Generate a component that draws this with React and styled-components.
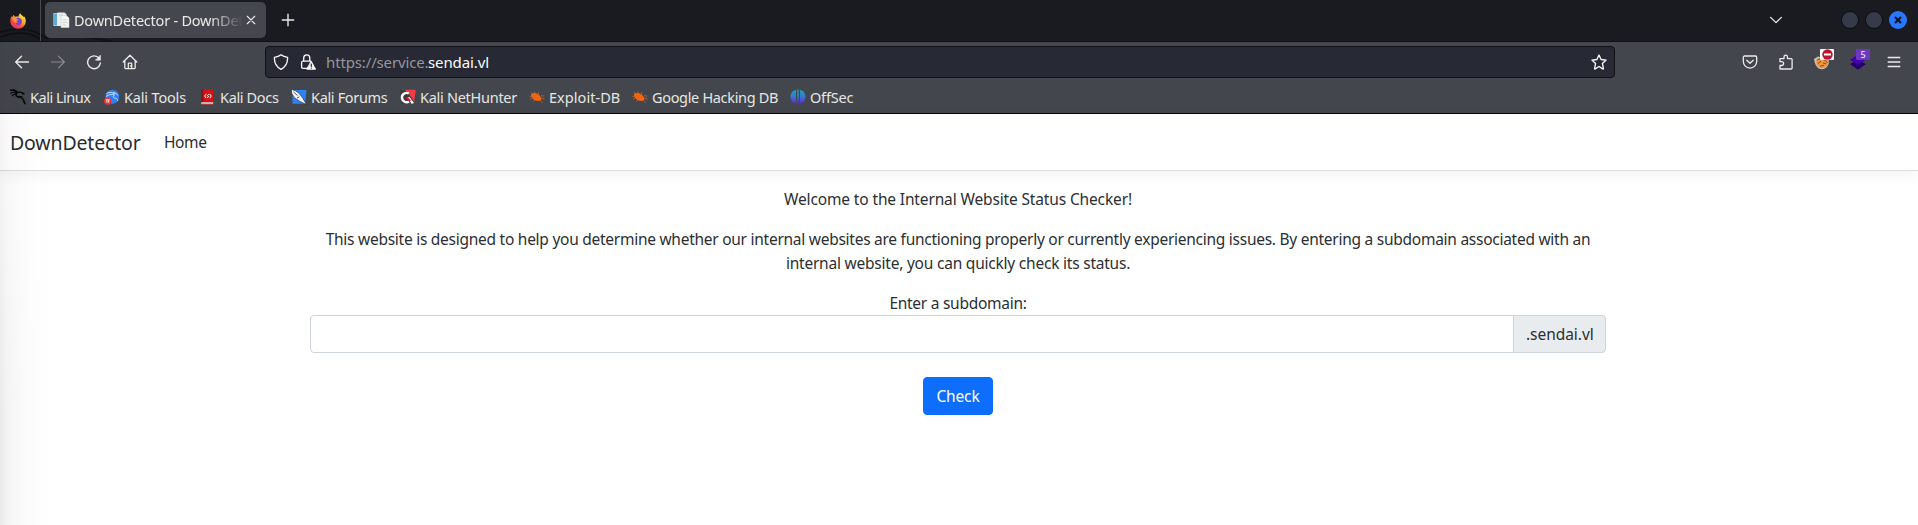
import React from "react";
import styled, { createGlobalStyle } from "styled-components";

const GlobalStyle = createGlobalStyle`
  *, *::before, *::after { box-sizing: border-box; }
  body { margin: 0; background: #fff; overflow: hidden; }
  svg { display: block; flex: none; }
  button, input { font: inherit; }
`;

const Screen = styled.div`
  position: relative;
  display: flex;
  flex-direction: column;
  width: 100%;
  height: 525px;
  overflow: hidden;
  background: #fff;
  font-family: "Noto Sans", sans-serif;
`;

const Text = styled.span`
  display: block;
  white-space: nowrap;
  letter-spacing: ${(p) => p.$track || 0}px;
`;

/* Tab strip */
const TabStrip = styled.header`
  position: relative;
  display: flex;
  align-items: flex-start;
  height: 42px;
  flex: none;
  background: #1a1b20;
  border-bottom: 1px solid #101114;
  color: #e9e9e7;
`;

const Wallpaper = styled.svg`
  position: absolute;
  left: 0;
  top: 0;
`;

const HomeTab = styled.div`
  position: relative;
  display: flex;
  align-items: center;
  width: 41px;
  height: 41px;
  padding-left: 10px;
  border-right: 1px solid #4b4c51;
`;

const Tab = styled.div`
  position: relative;
  display: flex;
  align-items: center;
  width: 221px;
  height: 36px;
  margin: 2px 0 0 4px;
  padding: 0 9px 0 8px;
  border-radius: 5px;
  background: #45474e;
  font-size: 14.5px;
`;

const TabTitle = styled.div`
  width: 169px;
  margin: 0 2px 0 4px;
  overflow: hidden;
  line-height: 24px;
  mask-image: linear-gradient(to right, #000 136px, transparent 169px);
`;

const NewTab = styled.div`
  margin: 13px 0 0 15px;
`;

const WindowControls = styled.div`
  display: flex;
  align-items: center;
  height: 40px;
  margin-left: auto;
  padding-right: 11px;
`;

const TabsMenu = styled.div`
  margin-right: 58px;
`;

const WindowButtons = styled.div`
  display: flex;
  align-items: center;
  gap: 6px;
`;

const WindowButton = styled.div`
  display: flex;
  align-items: center;
  justify-content: center;
  width: 18px;
  height: 18px;
  border: ${(p) => (p.$close ? "0" : "1px solid #0c0d10")};
  border-radius: 50%;
  background: ${(p) => (p.$close ? "#2777ff" : "#363b49")};
`;

/* Navigation toolbar */
const Toolbar = styled.div`
  display: flex;
  align-items: center;
  height: 40px;
  flex: none;
  background: #44464d;
  color: #ececea;
`;

const NavButtons = styled.div`
  display: flex;
  gap: 20px;
  width: 265px;
  padding-left: 14px;
`;

const UrlBar = styled.div`
  display: flex;
  align-items: center;
  width: 1350px;
  height: 32px;
  padding: 0 7px;
  border: 1px solid #111217;
  border-radius: 4px;
  background: #272934;
  color: #fbfbfe;
`;

const SiteIcons = styled.div`
  display: flex;
  gap: 11px;
  width: 53px;
`;

const Url = styled.div`
  display: flex;
  flex: 1;
  font-size: 15px;
  line-height: 24px;
`;

const UrlPrefix = styled(Text)`
  width: 102px;
  color: #96979b;
`;

const Extensions = styled.div`
  display: flex;
  align-items: center;
  gap: 20px;
  margin-left: auto;
  padding-right: 16px;
`;

const Extension = styled.div`
  position: relative;
`;

const Badge = styled.div`
  position: absolute;
  left: 6px;
  top: -5px;
  display: flex;
  align-items: center;
  justify-content: center;
  width: 14px;
  height: 11px;
  border-radius: 1px;
  background: ${(p) => p.$color};
  color: #fff;
  font-size: 9px;
  line-height: 11px;
`;

/* Bookmarks */
const Bookmarks = styled.div`
  display: flex;
  align-items: center;
  height: 32px;
  flex: none;
  padding: 0 0 1px 10px;
  border-bottom: 1px solid #08090b;
  background: #44464d;
  color: #e6e6e3;
  font-size: 14.5px;
  line-height: 24px;
`;

const Bookmark = styled.div`
  display: flex;
  align-items: center;
  gap: 4px;
  width: ${(p) => p.$width}px;
`;

/* Web page */
const Navbar = styled.nav`
  display: flex;
  align-items: center;
  height: 57px;
  flex: none;
  padding-left: 10px;
  border-bottom: 1px solid #dcdddd;
  background: #fff;
  box-shadow: 0 4px 14px rgba(0, 0, 0, 0.05);
  color: #282c30;
`;

const Brand = styled.div`
  width: 154px;
  padding-top: 2px;
  font-size: 19.5px;
  line-height: 30px;
`;

const NavLink = styled.div`
  font-size: 15.5px;
  line-height: 24px;
`;

const Main = styled.main`
  display: flex;
  flex-direction: column;
  align-items: center;
  padding: 16px 2px 0 0;
  color: #2b2f33;
  font-size: 15.5px;
  line-height: 24px;
`;

const Paragraph = styled.div`
  display: flex;
  flex-direction: column;
  align-items: center;
  margin-bottom: 16px;
`;

const InputGroup = styled.div`
  display: flex;
  width: 1296px;
  height: 38px;
  margin-bottom: 24px;
`;

const Input = styled.input`
  flex: 1;
  min-width: 0;
  padding: 6px 12px;
  border: 1px solid #ced4da;
  border-radius: 4px 0 0 4px;
  background: #fff;
  outline: 0;
`;

const Addon = styled.div`
  width: 93px;
  margin-left: -1px;
  padding: 6px 12px;
  border: 1px solid #ced4da;
  border-radius: 0 4px 4px 0;
  background: #e9ecef;
`;

const CheckButton = styled.button`
  width: 70px;
  height: 38px;
  padding: 6px 12px;
  border: 1px solid #0d6efd;
  border-radius: 4px;
  background: #0d6efd;
  color: #fff;
`;

const EdgeShade = styled.div`
  position: absolute;
  inset: 0 auto 0 0;
  width: 52px;
  pointer-events: none;
  background: linear-gradient(to right, rgba(0, 0, 0, 0.085), rgba(0, 0, 0, 0.045) 8px, rgba(0, 0, 0, 0.012) 30px, transparent);
  mask-image: linear-gradient(to bottom, rgba(0, 0, 0, 0.45) 110px, #000 420px);
`;

const Icon = ({ size = 16, children, ...rest }) => (
  <svg width={size} height={size} viewBox="0 0 16 16" fill="none" stroke="currentColor" strokeWidth="1.2" strokeLinecap="round" strokeLinejoin="round" {...rest}>
    {children}
  </svg>
);

const FirefoxIcon = () => (
  <svg width="16" height="16" viewBox="0 0 16 16">
    <defs>
      <linearGradient id="ffBody" x1="0.85" y1="0.05" x2="0.2" y2="0.95">
        <stop offset="0" stopColor="#fff24a" />
        <stop offset="0.42" stopColor="#ffa62b" />
        <stop offset="0.7" stopColor="#ff4b3c" />
        <stop offset="1" stopColor="#e62a86" />
      </linearGradient>
    </defs>
    <path d="M1.5 3.2 2.6 4.1 3.3 1.7 5 3.7C6.5 3.3 8 3.4 8.6 3.7 8.5 2 9.4.8 10.5.2c.3 1.8 2.1 2.3 3.2 3.7l.7-.5c2.2 3.4 1.7 7.6-.8 10C11 16 6.300 16.500 3.200 14.100-.2 11.500-.5 6.700 1.500 3.200Z" fill="url(#ffBody)" />
    <path d="M6.100 5.300c1.200-1.100 3.900-.9 5.200 1 1.100 1.700.7 4.500-1.200 5.400-2 .9-4.500 0-4.800-2.100 1.200.5 2.400.2 3-.7-1-.2-2.200-.4-2.500-1.300Z" fill="#7444dc" />
    <path d="M2.800 5.600c.8-.7 2.200-.6 3.300-.2l2.200 1.100c-.1.900-1.100.8-1.800 1.300-.5.4-.3 1.200.5 1.700-1.500.6-2.900-.2-3.400-1.300Z" fill="#ff982e" />
  </svg>
);

const PageIcon = () => (
  <svg width="17" height="16" viewBox="0 0 17 16">
    <path d="M.5 1h10v13H.5Z" fill="#dceaf2" />
    <path d="M1 1.500h3v12H1Z" fill="#62a9d2" />
    <path d="M4.500.5h7l2 2V13h-9Z" fill="#e9eff2" />
    <path d="M8 3.500h5.500l2.500 2.500v9.500H8Z" fill="#f5f5f3" stroke="#cbd0d2" strokeWidth=".6" />
    <path d="M6 3h4M9.500 8h4.500M9.500 10.500h5M9.500 13h4" stroke="#c3c9cc" strokeWidth=".8" />
  </svg>
);

const KaliIcon = () => (
  <svg width="16" height="16" viewBox="0 0 16 16" fill="none" stroke="#08090a" strokeLinecap="round" strokeLinejoin="round">
    <path d="M.8 1.200C4 .6 6 2 7.500 3.200c-2 1.500-2.200 4 .3 4.600 2.500.6 4.600.8 5.500 2.700.5 1.200.7 2.500 1.700 4" strokeWidth="1.700" />
    <path d="M.7 4.200C3 2.900 5 3 7.500 3.300c2-.5 4.700-.2 6.700 1.600L12.500 4.800M2.400 6.600 6 4.200M8 7.600l4 .1M5.700 2 4 .7" strokeWidth="1.200" />
  </svg>
);

const KaliToolsIcon = () => (
  <svg width="16" height="16" viewBox="0 0 16 16">
    <circle cx="8.300" cy="7.800" r="7" fill="#2e80f2" />
    <path d="M2.500 4.500c3-1.500 6-1.300 8.500.3M2 7.500C5 5.300 8.500 5 10.500 6c-2.500 1.500-1 3 1 3.200 1.600.2 2.100 1.700 2.300 2.800M9 3.600c2.500 0 4 1.300 5 3" fill="none" stroke="#c5e0ff" strokeWidth="1" />
    <circle cx="3.700" cy="12.100" r="3.700" fill="#ee3037" />
    <path d="M1.800 10.700h3.800M2.900 10.700v3M4.700 10.700v3" stroke="#fff" strokeWidth=".9" />
  </svg>
);

const KaliDocsIcon = () => (
  <svg width="16" height="16" viewBox="0 0 16 16">
    <path d="M2 .3h11v12.900H2Z" fill="#d41216" />
    <path d="M1 .5h2.300v13H1Z" fill="#951014" />
    <path d="M1.200 13.300h12v2h-12Z" fill="#eaded6" />
    <path d="M1.200 15.200h12" stroke="#b6181c" strokeWidth=".8" />
    <path d="M6.300 4.800 4.700 7l1.300 2.100M9.600 4.900l1.700 2.100-1.500 2.200M8.900 5.300 7.300 6.600l1.400 1-1.700 1.200" fill="none" stroke="#fff" strokeWidth="1" />
  </svg>
);

const KaliForumsIcon = () => (
  <svg width="16" height="16" viewBox="0 0 16 16">
    <path d="M1.500 1H15.500L14 14.700H1.500Z" fill="#2b83f5" />
    <path d="M.2.300 4.500 1.800 8 4.300 11 8l4.500 7.500L9 12.500 3.500 8.700.8 4.500Z" fill="#f5f6f7" stroke="#1c2029" strokeWidth=".6" />
    <path d="m2.500 3 4 3.600M6 9l2.500-1.200" stroke="#2a3140" strokeWidth=".8" />
  </svg>
);

const NetHunterIcon = () => (
  <svg width="16" height="16" viewBox="0 0 16 16">
    <path d="M2 .8h13.700L14 14.800H4Z" fill="#f33b42" />
    <path d="M0 1h5l3 3 6 8-1.500 2.800H2Z" fill="#3a3b41" />
    <path d="M12.800 14.300 8.300 8.600M8.800 4.500C5.500 2.700 1.500 5.500 2 9c.4 3.500 4 5.300 7 3.700" fill="none" stroke="#fff" strokeWidth="2.400" />
    <path d="m6.300 8.300 4 3.700" stroke="#d81b2c" strokeWidth="2" />
  </svg>
);

const ExploitIcon = () => (
  <svg width="16" height="16" viewBox="0 0 16 16">
    <path d="M2.500 4.800C4.800 3.300 8.300 4.200 10.600 6.600c1.700 1.800 2.200 4 1.200 4.600-2.200 1.200-5.200.8-7.400-.9C2.500 8.800 1.300 6.100 2.500 4.800Z" fill="#f2640f" />
    <path d="M.4 7.300 4 7.500M1.500 3 4 5M5 2.500l2.500 2.500M9.500 3.300l.2 2.700M12 6.800l3.300.2M12 9l3.600 1M11 11l2.800 2.600M6 10.500l-1.500 2M3 9.300l-1.700.8" stroke="#cf6a29" strokeWidth=".7" />
  </svg>
);

const OffSecIcon = () => (
  <svg width="16" height="16" viewBox="0 0 16 16">
    <defs>
      <linearGradient id="offsec" x1="0" y1="0" x2="0" y2="1">
        <stop offset="0" stopColor="#18a6b4" />
        <stop offset="0.5" stopColor="#3d73cf" />
        <stop offset="1" stopColor="#5b22d2" />
      </linearGradient>
    </defs>
    <path d="M6 .8v13.800C2.700 13.800.5 11.200.5 7.700S2.700 1.600 6 .8ZM7.200.4h1.600v15.200H7.200ZM10 .8c3.300.8 5.500 3.400 5.500 6.900s-2.200 6.100-5.500 6.900Z" fill="url(#offsec)" />
  </svg>
);

const bookmarks = [
  { label: "Kali Linux", icon: KaliIcon, width: 94, track: -0.49 },
  { label: "Kali Tools", icon: KaliToolsIcon, width: 96, track: -0.17 },
  { label: "Kali Docs", icon: KaliDocsIcon, width: 91, track: -0.35 },
  { label: "Kali Forums", icon: KaliForumsIcon, width: 109, track: -0.34 },
  { label: "Kali NetHunter", icon: NetHunterIcon, width: 129, track: -0.28 },
  { label: "Exploit-DB", icon: ExploitIcon, width: 103, track: 0.05 },
  { label: "Google Hacking DB", icon: ExploitIcon, width: 158, track: -0.33 },
  { label: "OffSec", icon: OffSecIcon, width: 70, track: -0.2 },
];

export default function App() {
  return (
    <Screen>
      <GlobalStyle />
      <TabStrip>
        <Wallpaper width="130" height="41" viewBox="0 0 130 41" fill="none">
          <path d="M0 32C18 27 35 29 48 39M0 37c18-6 33-5 42 4M40 37c22-3 48 0 72 4" stroke="#101115" strokeWidth="1.600" />
        </Wallpaper>
        <HomeTab><FirefoxIcon /></HomeTab>
        <Tab>
          <PageIcon />
          <TabTitle><Text $track={-0.22}>DownDetector - DownDetector</Text></TabTitle>
          <Icon size={12} strokeWidth="1.500"><path d="m3 3 10 10M13 3 3 13" /></Icon>
        </Tab>
        <NewTab>
          <Icon size={14} strokeWidth="1.600"><path d="M8 1.500v13M1.500 8h13" /></Icon>
        </NewTab>
        <WindowControls>
          <TabsMenu>
            <Icon size={14} strokeWidth="1.500"><path d="m1.800 5 6.200 6 6.200-6" /></Icon>
          </TabsMenu>
          <WindowButtons>
            <WindowButton />
            <WindowButton />
            <WindowButton $close>
              <svg width="8" height="8" viewBox="0 0 8 8"><path d="m1 1 6 6M7 1 1 7" stroke="#0c1220" strokeWidth="2.100" /></svg>
            </WindowButton>
          </WindowButtons>
        </WindowControls>
      </TabStrip>

      <Toolbar>
        <NavButtons>
          <Icon strokeWidth="1.400"><path d="M14.500 8H1.700M7.500 2.200 1.700 8l5.800 5.800" /></Icon>
          <Icon strokeWidth="1.200" opacity=".42"><path d="M1.500 8h12.800M8.500 2.200 14.300 8l-5.800 5.800" /></Icon>
          <Icon strokeWidth="1.400">
            <path d="M13.200 4.500A6.400 6.400 0 1 0 14.400 9" />
            <path d="M14.400 1.500v4.700H9.700Z" fill="currentColor" strokeWidth=".6" />
          </Icon>
          <Icon strokeWidth="1.300"><path d="M1.200 8 8 1.200 14.800 8M2.800 6.800v6.700c0 .8.500 1.200 1.200 1.200h8c.7 0 1.200-.4 1.200-1.200V6.800M6.300 14.500V9.800c0-.4.300-.7.700-.7h2c.4 0 .7.300.7.700v4.700M9.600 12H8.500" /></Icon>
        </NavButtons>
        <UrlBar>
          <SiteIcons>
            <Icon strokeWidth="1.300"><path d="M8 .8c2.100 1.700 4.200 2.200 6.600 2.500.2 5.500-1.600 9.500-6.600 12-5-2.500-6.800-6.500-6.600-12C3.800 3 5.900 2.500 8 .8Z" /></Icon>
            <Icon strokeWidth="1.300">
              <path d="M8.500 14.300H3c-.8 0-1.400-.6-1.400-1.400V8.600c0-.8.600-1.400 1.400-1.400h7.700M3.700 7V4.300C3.700 2 5 .8 6.700.8s3.100 1.200 3.100 3.500V7" />
              <path d="m11.300 7.500 4.200 7.700H7.100Z" fill="currentColor" strokeWidth="1" />
              <path d="M11.300 10v2.500M11.300 14v.2" stroke="#272934" strokeWidth="1.200" />
            </Icon>
          </SiteIcons>
          <Url>
            <UrlPrefix $track={-0.14}>https://service.</UrlPrefix>
            <Text $track={-0.1}>sendai.vl</Text>
          </Url>
          <Icon strokeWidth="1.300"><path d="m8 1 2.100 4.500 5 .6-3.700 3.400 1 4.900c.1.500-.2.700-.7.500L8 12.500l-3.700 2.400c-.5.200-.8 0-.7-.5l1-4.900L.9 6.100l5-.6Z" /></Icon>
        </UrlBar>
        <Extensions>
          <Icon strokeWidth="1.300"><path d="M2.700 2h10.600c.8 0 1.400.6 1.400 1.400v3.800c0 4-3 6.900-6.700 6.900s-6.700-2.900-6.700-6.900V3.400C1.300 2.600 1.900 2 2.700 2ZM4.800 6.200 8 9.300l3.200-3.100" /></Icon>
          <Icon strokeWidth="1.300"><path d="M2 15V11.500h1.600c2.700 0 2.700-3.800 0-3.800H2V4.600h4V3c0-2.400 3.500-2.400 3.500 0v1.600h3.700c.5 0 .9.400.9.900V14c0 .6-.4 1-.9 1Z" /></Icon>
          <Extension>
            <svg width="16" height="16" viewBox="0 0 16 16">
              <path d="M0 5 4 2.500 14.500 5c1.300 5.300-1.500 10-6.500 10.200C3.500 15.400.8 11 0 5Z" fill="#c6c2bb" />
              <circle cx="8.200" cy="8.300" r="5.900" fill="#ef963f" />
              <path d="M2.800 6.300C6.500 3.600 12.500 6 13.300 9M3.800 9.500 7 7.300M9 8.900l3 1M6 12.300l4-1" stroke="#704023" fill="none" strokeWidth=".9" />
            </svg>
            <Badge $color="#fff">
              <svg width="11" height="11" viewBox="0 0 11 11">
                <circle cx="5.500" cy="5.500" r="5.200" fill="#bf1430" />
                <path d="M2 4.500h7v2H2Z" fill="#fff" />
              </svg>
            </Badge>
          </Extension>
          <Extension>
            <svg width="16" height="16" viewBox="0 0 16 16">
              <path d="m0 10 8-4 8 4-8 5.700Z" fill="#22006c" />
              <path d="m0 5.500 8-5 8 5-8 5.800Z" fill="#4400aa" />
            </svg>
            <Badge $color="#6b38c4">5</Badge>
          </Extension>
          <Icon strokeWidth="1.300"><path d="M2.200 3.500h11.600M2.200 8h11.600M2.200 12.500h11.600" /></Icon>
        </Extensions>
      </Toolbar>

      <Bookmarks>
        {bookmarks.map(({ label, icon: BookmarkIcon, width, track }) => (
          <Bookmark key={label} $width={width}>
            <BookmarkIcon />
            <Text $track={track}>{label}</Text>
          </Bookmark>
        ))}
      </Bookmarks>

      <Navbar>
        <Brand><Text $track={-0.16}>DownDetector</Text></Brand>
        <NavLink><Text $track={-0.4}>Home</Text></NavLink>
      </Navbar>
      <Main>
        <Paragraph>
          <Text $track={-0.14}>Welcome to the Internal Website Status Checker!</Text>
        </Paragraph>
        <Paragraph>
          <Text $track={-0.263}>This website is designed to help you determine whether our internal websites are functioning properly or currently experiencing issues. By entering a subdomain associated with an</Text>
          <Text $track={-0.22}>internal website, you can quickly check its status.</Text>
        </Paragraph>
        <Text $track={-0.27}>Enter a subdomain:</Text>
        <InputGroup>
          <Input aria-label="Subdomain" />
          <Addon><Text $track={-0.05}>.sendai.vl</Text></Addon>
        </InputGroup>
        <CheckButton><Text $track={-0.15}>Check</Text></CheckButton>
      </Main>
      <EdgeShade />
    </Screen>
  );
}
